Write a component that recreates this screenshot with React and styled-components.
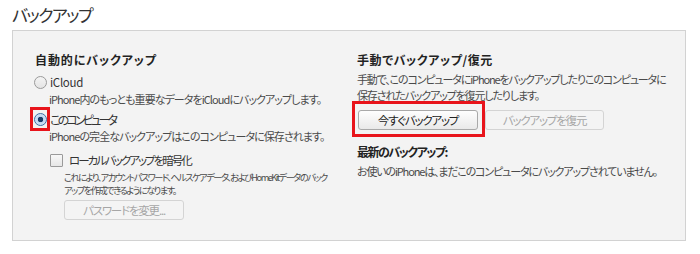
import React from "react";
import styled, { createGlobalStyle } from "styled-components";

const GlobalStyle = createGlobalStyle`
    html, body {
        margin: 0;
        padding: 0;
        background: #fff;
    }
    body {
        font-family: "Noto Sans CJK JP", "Noto Sans", sans-serif;
        font-feature-settings: "palt";
        color: #4a4a4a;
    }
`;

const Page = styled.div`
    width: 700px;
    height: 254px;
    padding: 3px 14px 0 12px;
    box-sizing: border-box;
`;

const Title = styled.h1`
    margin: 0;
    font-size: 17px;
    font-weight: 400;
    line-height: 24px;
    color: #333;
    letter-spacing: -1.6px;
`;

const Panel = styled.section`
    margin-top: 3px;
    height: 211px;
    box-sizing: border-box;
    background: #f3f3f3;
    border: 1px solid #d2d2d2;
    padding: 20px 0 0 22px;
    display: grid;
    grid-template-columns: 322px 1fr;
`;

const Column = styled.div`
    display: flex;
    flex-direction: column;
`;

const Heading = styled.h2`
    margin: ${p => p.$top || 0}px 0 ${p => p.$gap || 0}px;
    font-size: 12px;
    font-weight: 700;
    line-height: 18px;
    letter-spacing: ${p => p.$ls || 0}px;
    color: #222;
    white-space: nowrap;
`;

const Text = styled.p`
    margin: ${p => p.$top || 0}px 0 0;
    padding-left: ${p => p.$indent || 0}px;
    font-size: ${p => p.$small ? 9.2 : 11}px;
    letter-spacing: ${p => p.$ls}px;
    line-height: ${p => p.$lh || 16}px;
    color: #4a4a4a;
    white-space: nowrap;
`;

const OptionRow = styled.label`
    display: flex;
    align-items: center;
    height: 18px;
    margin-top: ${p => p.$top || 0}px;
    margin-left: ${p => p.$left || 0}px;
    font-size: ${p => p.$size || 12}px;
    letter-spacing: ${p => p.$ls || 0}px;
    color: #333;
    white-space: nowrap;
`;

const Mark = styled.span`
    position: relative;
    display: flex;
    margin-right: ${p => p.$gap ?? 3}px;
`;

/* red annotation frame drawn over the control */
const Highlight = styled(Mark)`
    &::after {
        content: "";
        position: absolute;
        top: ${p => p.$t}px;
        bottom: ${p => p.$b}px;
        left: ${p => p.$l}px;
        right: ${p => p.$r}px;
        border: 3px solid #e8141b;
        pointer-events: none;
    }
`;

const Radio = styled.span`
    display: block;
    width: 11px;
    height: 11px;
    border-radius: 50%;
    border: 1px solid ${p => p.$on ? "#3d6fa6" : "#9a9a9a"};
    background: ${p => p.$on
        ? "radial-gradient(circle, #1b3e6b 0 2.5px, #bcd7f2 3px, #e6f0fb 100%)"
        : "linear-gradient(#f4f4f4, #e4e4e4)"};
`;

const Checkbox = styled.span`
    display: block;
    width: 11px;
    height: 11px;
    border: 1px solid #9a9a9a;
    border-radius: 1px;
    background: linear-gradient(#f8f8f8, #e6e6e6);
`;

const Button = styled.button`
    display: block;
    height: 20px;
    width: ${p => p.$w}px;
    padding: 0;
    margin: 0;
    font-family: inherit;
    font-feature-settings: "palt";
    font-size: 11.5px;
    letter-spacing: -1.2px;
    line-height: 18px;
    border-radius: 3px;
    border: 1px solid ${p => p.disabled ? "#d4d4d4" : "#a9a9a9"};
    background: ${p => p.disabled ? "#f4f4f4" : "linear-gradient(#fefefe, #e9e9e9)"};
    color: ${p => p.disabled ? "#a6a6a6" : "#222"};
`;

const ButtonRow = styled.div`
    display: flex;
    align-items: center;
    gap: 7px;
    margin-top: ${p => p.$top || 0}px;
    margin-left: ${p => p.$left || 0}px;
`;

export default function App() {
    return (
        <Page>
            <GlobalStyle />
            <Title>バックアップ</Title>
            <Panel>
                <Column>
                    <Heading $gap={4} $ls={0.9}>自動的にバックアップ</Heading>
                    <OptionRow $left={-1} $size={11.5} $ls={-0.3}>
                        <Mark><Radio /></Mark>
                        iCloud
                    </OptionRow>
                    <Text $indent={14} $ls={-0.95}>iPhone内のもっとも重要なデータをiCloudにバックアップします。</Text>
                    <OptionRow $top={3} $left={-1} $ls={-2.8}>
                        <Highlight $t={-6} $b={-5} $l={-4} $r={-3}>
                            <Radio $on />
                        </Highlight>
                        このコンピュータ
                    </OptionRow>
                    <Text $indent={14} $ls={-0.95}>iPhoneの完全なバックアップはこのコンピュータに保存されます。</Text>
                    <OptionRow $top={7} $left={15} $size={11.5} $ls={-2}>
                        <Mark $gap={6}><Checkbox /></Mark>
                        ローカルバックアップを暗号化
                    </OptionRow>
                    <Text $top={2} $indent={29} $small $ls={-1.5} $lh={13}>
                        これにより、アカウントパスワード、ヘルスケアデータ、およびHomeKitデータのバック<br />
                        アップを作成できるようになります。
                    </Text>
                    <ButtonRow $top={3} $left={29}>
                        <Button $w={120} disabled>パスワードを変更...</Button>
                    </ButtonRow>
                </Column>
                <Column>
                    <Heading $gap={2} $ls={0.6}>手動でバックアップ/復元</Heading>
                    <Text $lh={16} $ls={-1.15}>
                        手動で、このコンピュータにiPhoneをバックアップしたりこのコンピュータに<br />
                        保存されたバックアップを復元したりします。
                    </Text>
                    <ButtonRow $top={7} $left={1}>
                        <Highlight $gap={0} $t={-9} $b={-7} $l={-6} $r={-7}>
                            <Button $w={120}>今すぐバックアップ</Button>
                        </Highlight>
                        <Button $w={119} disabled>バックアップを復元</Button>
                    </ButtonRow>
                    <Heading $top={13} $gap={2} $ls={-1.5}>最新のバックアップ:</Heading>
                    <Text $lh={17} $ls={-1.15}>お使いのiPhoneは、まだこのコンピュータにバックアップされていません。</Text>
                </Column>
            </Panel>
        </Page>
    );
}
